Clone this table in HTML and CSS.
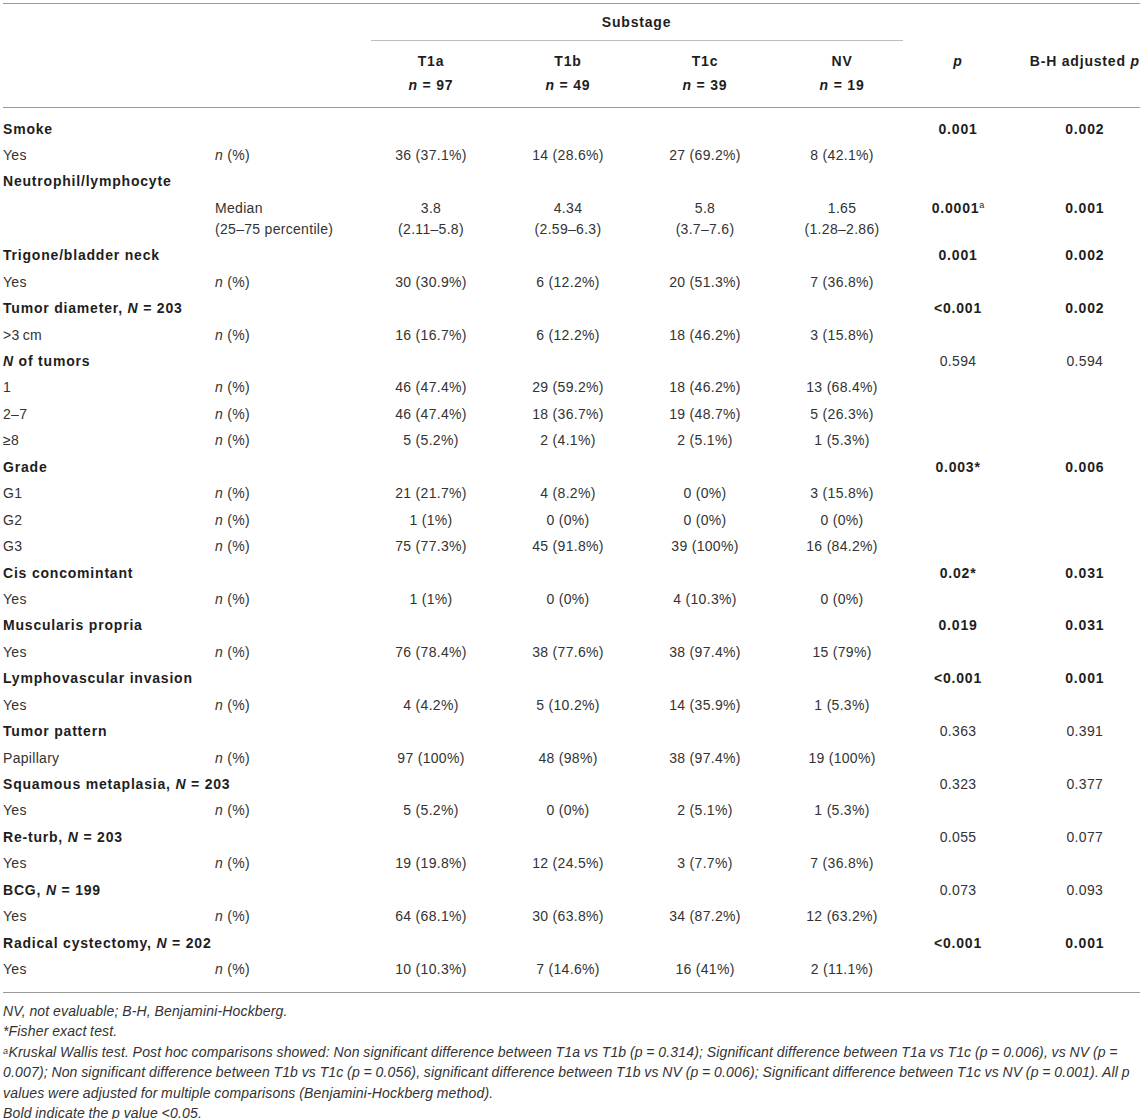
FILE: index.html
```html
<!DOCTYPE html>
<html>
<head>
<meta charset="utf-8">
<link rel="stylesheet" href="styles.css">
</head>
<body>
<div class="page">
<table class="data">
<colgroup>
<col class="c-label"><col class="c-stat"><col class="c-sub"><col class="c-sub"><col class="c-sub"><col class="c-sub"><col class="c-p"><col class="c-bh">
</colgroup>
<thead>
<tr class="hrow1">
<th></th><th></th>
<th colspan="4" class="sub-th"><div class="substage">Substage</div></th>
<th></th><th></th>
</tr>
<tr class="hrow2">
<th></th><th></th>
<th class="num">T1a<br><i>n</i> = 97</th>
<th class="num">T1b<br><i>n</i> = 49</th>
<th class="num">T1c<br><i>n</i> = 39</th>
<th class="num">NV<br><i>n</i> = 19</th>
<th class="num pcol"><i>p</i></th>
<th class="num bhcol">B-H adjusted <i>p</i></th>
</tr>
</thead>
<tbody>
<tr class="first"><td colspan="2" class="sec">Smoke</td><td></td><td></td><td></td><td></td><td class="num pcol b">0.001</td><td class="num bhcol b">0.002</td></tr>
<tr><td>Yes</td><td><i>n</i> (%)</td><td class="num">36 (37.1%)</td><td class="num">14 (28.6%)</td><td class="num">27 (69.2%)</td><td class="num">8 (42.1%)</td><td></td><td></td></tr>
<tr><td colspan="2" class="sec">Neutrophil/lymphocyte</td><td></td><td></td><td></td><td></td><td></td><td></td></tr>
<tr><td></td><td>Median<br>(25–75 percentile)</td><td class="num">3.8<br>(2.11–5.8)</td><td class="num">4.34<br>(2.59–6.3)</td><td class="num">5.8<br>(3.7–7.6)</td><td class="num">1.65<br>(1.28–2.86)</td><td class="num pcol b">0.0001<sup>a</sup></td><td class="num bhcol b">0.001</td></tr>
<tr><td colspan="2" class="sec">Trigone/bladder neck</td><td></td><td></td><td></td><td></td><td class="num pcol b">0.001</td><td class="num bhcol b">0.002</td></tr>
<tr><td>Yes</td><td><i>n</i> (%)</td><td class="num">30 (30.9%)</td><td class="num">6 (12.2%)</td><td class="num">20 (51.3%)</td><td class="num">7 (36.8%)</td><td></td><td></td></tr>
<tr><td colspan="2" class="sec">Tumor diameter, <i>N</i> = 203</td><td></td><td></td><td></td><td></td><td class="num pcol b">&lt;0.001</td><td class="num bhcol b">0.002</td></tr>
<tr><td>&gt;3&thinsp;cm</td><td><i>n</i> (%)</td><td class="num">16 (16.7%)</td><td class="num">6 (12.2%)</td><td class="num">18 (46.2%)</td><td class="num">3 (15.8%)</td><td></td><td></td></tr>
<tr><td colspan="2" class="sec"><i>N</i> of tumors</td><td></td><td></td><td></td><td></td><td class="num pcol">0.594</td><td class="num bhcol">0.594</td></tr>
<tr><td>1</td><td><i>n</i> (%)</td><td class="num">46 (47.4%)</td><td class="num">29 (59.2%)</td><td class="num">18 (46.2%)</td><td class="num">13 (68.4%)</td><td></td><td></td></tr>
<tr><td>2–7</td><td><i>n</i> (%)</td><td class="num">46 (47.4%)</td><td class="num">18 (36.7%)</td><td class="num">19 (48.7%)</td><td class="num">5 (26.3%)</td><td></td><td></td></tr>
<tr><td>≥8</td><td><i>n</i> (%)</td><td class="num">5 (5.2%)</td><td class="num">2 (4.1%)</td><td class="num">2 (5.1%)</td><td class="num">1 (5.3%)</td><td></td><td></td></tr>
<tr><td colspan="2" class="sec">Grade</td><td></td><td></td><td></td><td></td><td class="num pcol b">0.003*</td><td class="num bhcol b">0.006</td></tr>
<tr><td>G1</td><td><i>n</i> (%)</td><td class="num">21 (21.7%)</td><td class="num">4 (8.2%)</td><td class="num">0 (0%)</td><td class="num">3 (15.8%)</td><td></td><td></td></tr>
<tr><td>G2</td><td><i>n</i> (%)</td><td class="num">1 (1%)</td><td class="num">0 (0%)</td><td class="num">0 (0%)</td><td class="num">0 (0%)</td><td></td><td></td></tr>
<tr><td>G3</td><td><i>n</i> (%)</td><td class="num">75 (77.3%)</td><td class="num">45 (91.8%)</td><td class="num">39 (100%)</td><td class="num">16 (84.2%)</td><td></td><td></td></tr>
<tr><td colspan="2" class="sec">Cis concomintant</td><td></td><td></td><td></td><td></td><td class="num pcol b">0.02*</td><td class="num bhcol b">0.031</td></tr>
<tr><td>Yes</td><td><i>n</i> (%)</td><td class="num">1 (1%)</td><td class="num">0 (0%)</td><td class="num">4 (10.3%)</td><td class="num">0 (0%)</td><td></td><td></td></tr>
<tr><td colspan="2" class="sec">Muscularis propria</td><td></td><td></td><td></td><td></td><td class="num pcol b">0.019</td><td class="num bhcol b">0.031</td></tr>
<tr><td>Yes</td><td><i>n</i> (%)</td><td class="num">76 (78.4%)</td><td class="num">38 (77.6%)</td><td class="num">38 (97.4%)</td><td class="num">15 (79%)</td><td></td><td></td></tr>
<tr><td colspan="2" class="sec">Lymphovascular invasion</td><td></td><td></td><td></td><td></td><td class="num pcol b">&lt;0.001</td><td class="num bhcol b">0.001</td></tr>
<tr><td>Yes</td><td><i>n</i> (%)</td><td class="num">4 (4.2%)</td><td class="num">5 (10.2%)</td><td class="num">14 (35.9%)</td><td class="num">1 (5.3%)</td><td></td><td></td></tr>
<tr><td colspan="2" class="sec">Tumor pattern</td><td></td><td></td><td></td><td></td><td class="num pcol">0.363</td><td class="num bhcol">0.391</td></tr>
<tr><td>Papillary</td><td><i>n</i> (%)</td><td class="num">97 (100%)</td><td class="num">48 (98%)</td><td class="num">38 (97.4%)</td><td class="num">19 (100%)</td><td></td><td></td></tr>
<tr><td colspan="2" class="sec">Squamous metaplasia, <i>N</i> = 203</td><td></td><td></td><td></td><td></td><td class="num pcol">0.323</td><td class="num bhcol">0.377</td></tr>
<tr><td>Yes</td><td><i>n</i> (%)</td><td class="num">5 (5.2%)</td><td class="num">0 (0%)</td><td class="num">2 (5.1%)</td><td class="num">1 (5.3%)</td><td></td><td></td></tr>
<tr><td colspan="2" class="sec">Re-turb, <i>N</i> = 203</td><td></td><td></td><td></td><td></td><td class="num pcol">0.055</td><td class="num bhcol">0.077</td></tr>
<tr><td>Yes</td><td><i>n</i> (%)</td><td class="num">19 (19.8%)</td><td class="num">12 (24.5%)</td><td class="num">3 (7.7%)</td><td class="num">7 (36.8%)</td><td></td><td></td></tr>
<tr><td colspan="2" class="sec">BCG, <i>N</i> = 199</td><td></td><td></td><td></td><td></td><td class="num pcol">0.073</td><td class="num bhcol">0.093</td></tr>
<tr><td>Yes</td><td><i>n</i> (%)</td><td class="num">64 (68.1%)</td><td class="num">30 (63.8%)</td><td class="num">34 (87.2%)</td><td class="num">12 (63.2%)</td><td></td><td></td></tr>
<tr><td colspan="2" class="sec">Radical cystectomy, <i>N</i> = 202</td><td></td><td></td><td></td><td></td><td class="num pcol b">&lt;0.001</td><td class="num bhcol b">0.001</td></tr>
<tr class="last"><td>Yes</td><td><i>n</i> (%)</td><td class="num">10 (10.3%)</td><td class="num">7 (14.6%)</td><td class="num">16 (41%)</td><td class="num">2 (11.1%)</td><td></td><td></td></tr>
</tbody>
</table>
<div class="notes">
<p>NV, not evaluable; B-H, Benjamini-Hockberg.</p>
<p>*Fisher exact test.</p>
<p><sup>a</sup>Kruskal Wallis test. Post hoc comparisons showed: Non significant difference between T1a vs T1b (p = 0.314); Significant difference between T1a vs T1c (p = 0.006), vs NV (p = 0.007); Non significant difference between T1b vs T1c (p = 0.056), significant difference between T1b vs NV (p = 0.006); Significant difference between T1c vs NV (p = 0.001). All p values were adjusted for multiple comparisons (Benjamini-Hockberg method).</p>
<p>Bold indicate the p value &lt;0.05.</p>
</div>
</div>
</body>
</html>
```

FILE: styles.css
```css
body {
  margin: 0;
  background: #ffffff;
  font-family: "Liberation Sans", Arial, Helvetica, sans-serif;
  color: #333333;
}

.page {
  padding: 3px 3px 0 3px;
}

.data {
  width: 1137px;
  table-layout: fixed;
  border-collapse: collapse;
  font-size: 14px;
  letter-spacing: 0.3px;
}

.c-label { width: 212px; }
.c-stat { width: 147.5px; }
.c-sub { width: 137px; }
.c-p { width: 95px; }
.c-bh { width: 134.5px; }

.data th {
  font-weight: bold;
  color: #1e1e1e;
  letter-spacing: 0.8px;
  vertical-align: top;
  white-space: nowrap;
  padding: 0;
}

.data .hrow1 th {
  border-top: 1px solid #9a9a9a;
  padding-top: 8px;
}

.data .hrow1 .sub-th {
  padding-left: 8px;
  padding-right: 8px;
}

.substage {
  line-height: 21px;
  padding-bottom: 7px;
  border-bottom: 1px solid #bdbdbd;
  text-align: center;
}

.data .hrow2 th {
  line-height: 24px;
  padding-top: 8px;
  padding-bottom: 10px;
  border-bottom: 1px solid #9a9a9a;
}

.data td {
  line-height: 21px;
  padding: 2.73px 0;
  vertical-align: top;
  white-space: nowrap;
}

.data tr.first td {
  padding-top: 10.5px;
}

.data tr.last td {
  padding-bottom: 11.5px;
  border-bottom: 1px solid #9a9a9a;
}

.data .num {
  text-align: center;
}

.data tr .pcol {
  padding-left: 0;
  padding-right: 0;
}

.data tr .bhcol {
  padding-left: 24px;
  padding-right: 0;
}

.data .sec,
.data .b {
  font-weight: bold;
  color: #1e1e1e;
  letter-spacing: 0.8px;
}

.data sup {
  font-size: 9px;
  line-height: 1;
  vertical-align: 5px;
  font-weight: normal;
  letter-spacing: 0;
}

.notes {
  margin-top: 8px;
  font-size: 14px;
  font-style: italic;
  line-height: 20.5px;
  letter-spacing: 0.17px;
  word-spacing: -0.45px;
  color: #333333;
}

.notes p {
  margin: 0;
}

.notes sup {
  font-size: 9px;
  line-height: 1;
  vertical-align: 3px;
  letter-spacing: 0;
  margin-right: 0.5px;
}
```
